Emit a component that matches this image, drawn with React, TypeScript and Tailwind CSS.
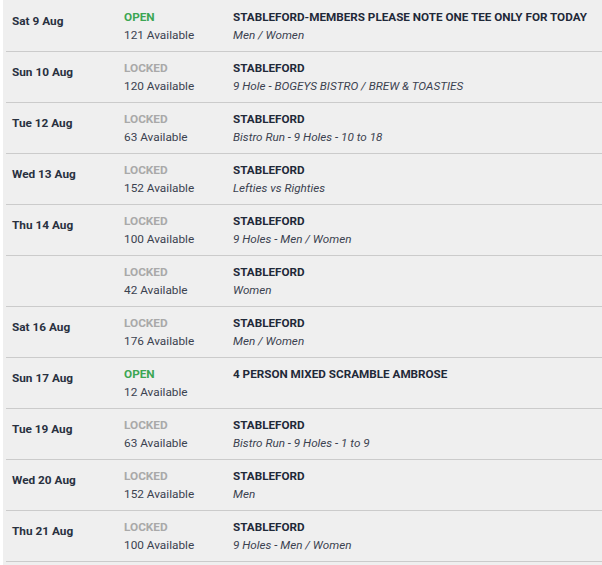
import React from "react";

type Row = {
  date: string;
  open: boolean;
  available: number;
  title: string;
  note?: string;
};

const rows: Row[] = [
  { date: "Sat 9 Aug", open: true, available: 121, title: "STABLEFORD-MEMBERS PLEASE NOTE ONE TEE ONLY FOR TODAY", note: "Men / Women" },
  { date: "Sun 10 Aug", open: false, available: 120, title: "STABLEFORD", note: "9 Hole - BOGEYS BISTRO / BREW & TOASTIES" },
  { date: "Tue 12 Aug", open: false, available: 63, title: "STABLEFORD", note: "Bistro Run - 9 Holes - 10 to 18" },
  { date: "Wed 13 Aug", open: false, available: 152, title: "STABLEFORD", note: "Lefties vs Righties" },
  { date: "Thu 14 Aug", open: false, available: 100, title: "STABLEFORD", note: "9 Holes - Men / Women" },
  { date: "", open: false, available: 42, title: "STABLEFORD", note: "Women" },
  { date: "Sat 16 Aug", open: false, available: 176, title: "STABLEFORD", note: "Men / Women" },
  { date: "Sun 17 Aug", open: true, available: 12, title: "4 PERSON MIXED SCRAMBLE AMBROSE" },
  { date: "Tue 19 Aug", open: false, available: 63, title: "STABLEFORD", note: "Bistro Run - 9 Holes - 1 to 9" },
  { date: "Wed 20 Aug", open: false, available: 152, title: "STABLEFORD", note: "Men" },
  { date: "Thu 21 Aug", open: false, available: 100, title: "STABLEFORD", note: "9 Holes - Men / Women" },
];

const App = () => {
  return (
    <div className="w-[602px] h-[565px] bg-white pl-[3px] overflow-hidden font-['Roboto',sans-serif]">
      <div className="bg-[#efefef] h-full pl-[3px] pt-px">
        {rows.map((row, index) => (
          <div
            key={index}
            className="grid grid-cols-[118px_109px_1fr] h-[51px] border-b border-[#cbcbcb]"
          >
            <div className="pl-[6px] pt-[12px] text-[11.8px] leading-[16px] font-bold text-[#29313f]">
              {row.date}
            </div>
            <div className="pt-[7px] text-[11.8px] leading-[18px]">
              <p
                className={`font-bold ${row.open ? "text-[#3ca653]" : "text-[#a9a9a9]"}`}
              >
                {row.open ? "OPEN" : "LOCKED"}
              </p>
              <p className="text-[#3b4250]">{row.available} Available</p>
            </div>
            <div className="pt-[7px] text-[11.7px] leading-[18px] whitespace-nowrap">
              <p className="font-bold text-[#1f2939]">{row.title}</p>
              {row.note && <p className="italic text-[#3b4250]">{row.note}</p>}
            </div>
          </div>
        ))}
      </div>
    </div>
  );
};

export default App;
